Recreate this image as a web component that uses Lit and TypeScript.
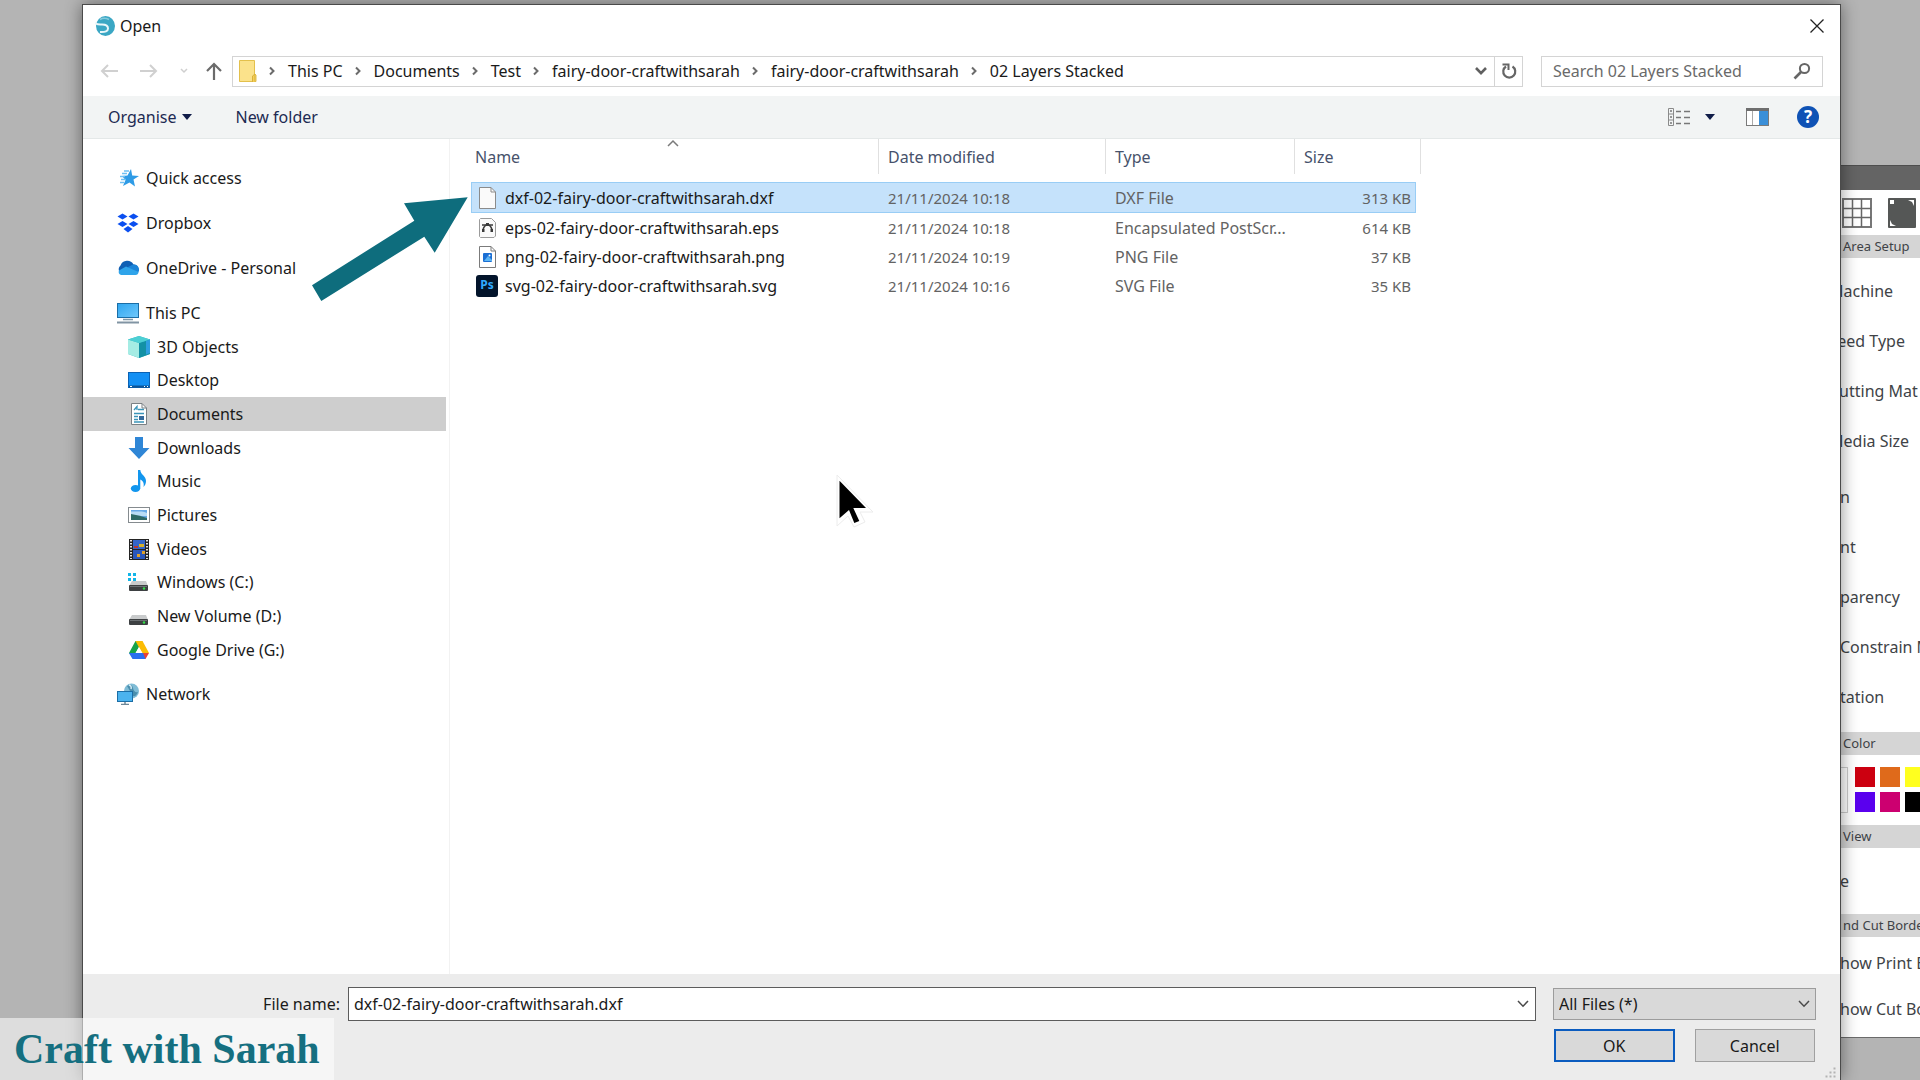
import { LitElement, html, css, svg, type TemplateResult } from "lit";
import { customElement, state } from "lit/decorators.js";
import { classMap } from "lit/directives/class-map.js";

const icon = (w: number, h: number, body: unknown) =>
  html`<svg width=${w} height=${h} viewBox="0 0 ${w} ${h}" aria-hidden="true" fill="none">${body}</svg>`;

const chevronRight = () => icon(8, 10, svg`<path d="M2 1.500 5.500 5 2 8.500" stroke="#6b6b6b" stroke-width="2"/>`);
const chevronDown = (color: string, width: number) =>
  icon(14, 10, svg`<path d="M2 2 7 7.200 12 2" stroke=${color} stroke-width=${width}/>`);
const caret = () => icon(10, 6, svg`<path d="M0 0H10L5 6Z" fill="#101c48"/>`);

const drive = svg`
  <path d="M4 10H18L20 15H1Z" fill="#c9cbcc"/>
  <rect x="1" y="14" width="19" height="6" rx="1" fill="#3d4042"/>
  <rect x="2" y="15" width="17" height="1" fill="#6b7073"/>
  <circle cx="16" cy="17.500" r="1.200" fill="#35e04a"/>`;

const ICONS: Record<string, () => TemplateResult> = {
  quick: () => icon(22, 22, svg`
    <path d="M14 2 15.200 8.500 22 9 16.500 12.500 18 19.500 12.500 15.500 6 19 8.500 13 5 9 10.500 8.500Z" fill="#2e9be6"/>
    <path d="M7 4H12M5 6.500H10M3 9.500H8M4 12.500H9M3 15.500H7" stroke="#6fc0f2" stroke-width="1.400"/>`),
  dropbox: () => icon(22, 22, svg`
    <g fill="#0b4ff0"><path d="M5.500 1.500 10.500 4.500 5.500 7.500 .5 4.500Z"/><path d="M16.500 1.500 21.500 4.500 16.500 7.500 11.500 4.500Z"/>
    <path d="M5.500 9 10.500 12 5.500 15 .5 12Z"/><path d="M16.500 9 21.500 12 16.500 15 11.500 12Z"/>
    <path d="M11 14 15.500 17 11 20.500 6.500 17Z"/></g>`),
  onedrive: () => icon(22, 22, svg`
    <path d="M5 17A5 5 0 0 1 3.500 8.500 7.200 7.200 0 0 1 16.500 7.500 5 5 0 0 1 20 16Z" fill="#0f5fb4"/>
    <path d="M11 10 16 7.600A5 5 0 0 1 20 16.500L12 14Z" fill="#1b84d8"/>
    <path d="M4 18A3.500 3.500 0 0 1 2 13.500L9 9.500 21.500 15A3.300 3.300 0 0 1 18.500 18Z" fill="#2fa4ea"/>`),
  pc: () => icon(22, 22, svg`
    <defs><linearGradient id="g" x1="0" y1="0" x2="1" y2="1"><stop stop-color="#2ea6f0"/><stop offset="1" stop-color="#70c8fb"/></linearGradient></defs>
    <rect x=".5" y="1.500" width="21" height="14" fill="url(#g)" stroke="#1c6ea6"/>
    <path d="M6 17.500H16" stroke="#7f98a8" stroke-width="1.500"/><path d="M0 20.500H22" stroke="#8194a3" stroke-width="2"/>`),
  objects: () => icon(22, 22, svg`
    <path d="M11 0 22 3.500V18L11 22 0 18V3.500Z" fill="#35b9c4"/>
    <path d="M0 3.500 11 7V22L0 18Z" fill="#a5ece4"/><path d="M11 7 22 3.500V18L11 22Z" fill="#1391a5"/>
    <path d="M0 3.500 11 0 22 3.500 11 7Z" fill="#4dcfd4"/><path d="M18 5 22 3.500V17L18 18.500Z" fill="#2f9fe0"/>`),
  desktop: () => icon(22, 22, svg`
    <rect x=".5" y="3.500" width="21" height="15" fill="#1390f4" stroke="#0b62b4"/>
    <path d="M1 17.500H21" stroke="#0d5496" stroke-width="2"/><path d="M2 17.500H4M16 17.500H17M19 17.500H20" stroke="#fff"/>`),
  documents: () => icon(22, 22, svg`
    <path d="M3.500.5H14L18.500 5V21.500H3.500Z" fill="#fff" stroke="#7b8083"/><path d="M14 .5V5H18.500" stroke="#7b8083"/>
    <path d="M6 7 9 3.500V7M10 6.500H16M6 10.500H16M6 13.500H10M6 16.500H10M6 19H16" stroke="#3a94b8" stroke-width="1.300"/>
    <rect x="11" y="13" width="5" height="4" fill="#356a9c"/>`),
  downloads: () => icon(22, 22, svg`<path d="M7 0H15V11H21.500L11 22 .5 11H7Z" fill="#2f86d6"/>`),
  music: () => icon(22, 22, svg`
    <ellipse cx="7.500" cy="18.500" rx="4.700" ry="3.500" fill="#1296ee"/>
    <path d="M10 0H12.300C12.500 4.500 18 6 18 11 18 13.500 17 15.500 15.500 17 16.500 12.500 14.500 10.500 12.300 9.500V18.500H10Z" fill="#1296ee"/>`),
  pictures: () => icon(22, 22, svg`
    <rect x=".5" y="3.500" width="21" height="15" fill="#fff" stroke="#858b8f"/><rect x="3" y="6" width="16" height="10" fill="#66a9e6"/>
    <path d="M3 7.500H12Q16 7 19 9V12H3Z" fill="#b9dcf5"/><path d="M3 10Q10 11 19 14V16H3Z" fill="#2f6a66"/>`),
  videos: () => icon(22, 22, svg`
    <rect x="1" y="1" width="20" height="21" fill="#232323"/><rect x="5" y="2" width="12" height="9" fill="#3466c8"/><rect x="5" y="12" width="12" height="9" fill="#2a57bb"/>
    <path d="M3 2V21M19 2V21" stroke="#e4e4e4" stroke-width="2" stroke-dasharray="1.500 1.500"/>
    <path d="M11 6H16V9H11Z" fill="#d6b12b"/><path d="M6 8H10V10H6Z" fill="#b9372f"/><path d="M9 16H12V19H9ZM14 13H17V16H14Z" fill="#e0a12a"/>`),
  windows: () => icon(22, 22, svg`${drive}<path d="M0 2H3V5H0ZM5 2H8V5H5ZM0 7H3V10H0ZM5 7H8V10H5Z" fill="#12b5e8"/>`),
  volume: () => icon(22, 22, drive),
  gdrive: () => icon(22, 22, svg`
    <path d="M7.500 2H14.500L11 8 5 19 1 14Z" fill="#16a34a"/><path d="M7.500 2H14.500L21 14H14Z" fill="#fbbc04"/>
    <path d="M14 14H21L17.500 20H15Z" fill="#e94235"/><path d="M1 14H15L17.500 20H4.500Z" fill="#2a6ef0"/><path d="M11 8 14.500 14H7.500Z" fill="#fff"/>`),
  network: () => icon(22, 22, svg`
    <circle cx="14.500" cy="8" r="7.500" fill="#7fbcd6"/><path d="M10 3Q15 0 16 5T21 9Q19 14 16 13Z" fill="#4a8ead"/><path d="M12 2Q15 3 14 6" stroke="#d5ebf4" stroke-width="1.500"/>
    <rect x=".5" y="8.500" width="15" height="10" fill="#4bb3ee" stroke="#1c6ea6"/><path d="M8 19V21M4 21.500H12" stroke="#6d8798" stroke-width="1.500"/>`),
  blank: () => icon(22, 24, svg`<path d="M3.500 1.500H15L19.500 6V22.500H3.500Z" fill="#fafafa" stroke="#8b8b8b"/><path d="M15 1.500V6H19.500" stroke="#8b8b8b"/>`),
  eps: () => icon(22, 24, svg`
    <path d="M4.500 2.500H15.500L19.500 6.500V20L18 21.500H4.500L3.500 20.500V3.500Z" fill="#fafafa" stroke="#9b9b9b"/>
    <path d="M7 14Q8 9 11.500 9T16 14" stroke="#3a3a3a" stroke-width="1.600"/><path d="M6 9H17" stroke="#3a3a3a" stroke-width="1.500"/><path d="M10 7H13V10H10ZM6 13H8.500V16H6ZM14.500 13H17V16H14.500Z" fill="#3a3a3a"/>`),
  png: () => icon(22, 24, svg`
    <path d="M3.500 1.500H15L19.500 6V22.500H3.500Z" fill="#fff" stroke="#7b7b7b"/><path d="M15 1.500V6H19.500" stroke="#7b7b7b"/>
    <rect x="7" y="8" width="9" height="9" rx="1" fill="#1b6fd4"/><path d="M8 16 12 11 16 15V16Z" fill="#5db6f5"/><circle cx="13.500" cy="10.500" r="1" fill="#fff"/>`),
};

interface Place { icon: string; label: string; child?: boolean; selected?: boolean }

const PLACES: Place[][] = [
  [{ icon: "quick", label: "Quick access" }],
  [{ icon: "dropbox", label: "Dropbox" }],
  [{ icon: "onedrive", label: "OneDrive - Personal" }],
  [
    { icon: "pc", label: "This PC" },
    { icon: "objects", label: "3D Objects", child: true },
    { icon: "desktop", label: "Desktop", child: true },
    { icon: "documents", label: "Documents", child: true, selected: true },
    { icon: "downloads", label: "Downloads", child: true },
    { icon: "music", label: "Music", child: true },
    { icon: "pictures", label: "Pictures", child: true },
    { icon: "videos", label: "Videos", child: true },
    { icon: "windows", label: "Windows (C:)", child: true },
    { icon: "volume", label: "New Volume (D:)", child: true },
    { icon: "gdrive", label: "Google Drive (G:)", child: true },
  ],
  [{ icon: "network", label: "Network" }],
];

const CRUMBS = ["This PC", "Documents", "Test", "fairy-door-craftwithsarah", "fairy-door-craftwithsarah", "02 Layers Stacked"];

const FILES = [
  { icon: "blank", name: "dxf-02-fairy-door-craftwithsarah.dxf", date: "21/11/2024 10:18", type: "DXF File", size: "313 KB" },
  { icon: "eps", name: "eps-02-fairy-door-craftwithsarah.eps", date: "21/11/2024 10:18", type: "Encapsulated PostScr...", size: "614 KB" },
  { icon: "png", name: "png-02-fairy-door-craftwithsarah.png", date: "21/11/2024 10:19", type: "PNG File", size: "37 KB" },
  { icon: "ps", name: "svg-02-fairy-door-craftwithsarah.svg", date: "21/11/2024 10:16", type: "SVG File", size: "35 KB" },
];

const base = css`
  :host { box-sizing: border-box; font-family: "Noto Sans", "Open Sans", sans-serif; font-size: 16px; line-height: 22px; color: #1a1a1a; }
  *, *::before, *::after { box-sizing: border-box; }
  svg { display: block; flex: none; }
  button, input, select { font: inherit; color: inherit; margin: 0; border-radius: 0; }
  button { border: 0; padding: 0; background: none; display: flex; align-items: center; justify-content: center; }
  a { color: inherit; text-decoration: none; }
  ul, ol { list-style: none; margin: 0; padding: 0; }
`;

@customElement("side-places")
class SidePlaces extends LitElement {
  static styles = [base, css`
    :host { display: flex; flex-direction: column; gap: 11px; padding-top: 22px; border-right: 1px solid #f2f2f2; }
    .group { display: grid; grid-template-rows: 34px; grid-auto-rows: 33px 34px 34px; margin-right: 3px; }
    .place { display: flex; align-items: center; gap: 7px; height: 100%; padding-left: 34px; }
    .child { padding-left: 45px; }
    .selected { background: #cecece; }
  `];
  render() {
    return html`${PLACES.map((group) => html`<ul class="group">${group.map((p) => html`
      <li><a href="#" class=${classMap({ place: true, child: !!p.child, selected: !!p.selected })}>${ICONS[p.icon]()}<span>${p.label}</span></a></li>`)}</ul>`)}`;
  }
}

@customElement("file-list")
class FileList extends LitElement {
  @state() private selected = 0;
  static styles = [base, css`
    :host { display: block; padding-left: 21px; }
    table { width: 950px; table-layout: fixed; border-collapse: separate; border-spacing: 0; }
    .name { width: 408px; } .date { width: 227px; } .type { width: 189px; }
    th { padding: 0 0 8px; font-weight: 400; text-align: left; color: #47526b; }
    .head { position: relative; display: flex; align-items: center; height: 35px; padding-left: 9px; border-right: 1px solid #e0e0e0; }
    .name .head { padding-left: 4px; }
    .sort { position: absolute; top: 0; left: 50%; margin-left: -8px; }
    td { height: 29px; padding: 0 0 0 9px; color: #636363; white-space: nowrap; }
    td:first-child { padding-left: 5px; color: #1a1a1a; }
    td:last-child { padding-right: 5px; text-align: right; border-right: 5px solid transparent; background-clip: padding-box; }
    .digits { font-size: 15px; }
    .file { display: flex; align-items: center; gap: 7px; }
    .ps { width: 22px; height: 22px; flex: none; border-radius: 3px; background: #03142b; color: #31a8ff; font-size: 12px; line-height: 20px; font-weight: 700; text-align: center; }
    .chosen td { height: 31px; background-color: #c5e2fb; box-shadow: inset 0 1px #99cdf5, inset 0 -1px #99cdf5; }
    .chosen td:first-child { box-shadow: inset 0 1px #99cdf5, inset 0 -1px #99cdf5, inset 1px 0 #99cdf5; }
    .chosen td:last-child { box-shadow: inset 0 1px #99cdf5, inset 0 -1px #99cdf5, inset -1px 0 #99cdf5; }
  `];
  render() {
    return html`<table>
      <thead><tr>
        <th class="name"><div class="head">Name<span class="sort">${icon(12, 8, svg`<path d="M1 7 6 2 11 7" stroke="#7a7a7a" stroke-width="1.500"/>`)}</span></div></th>
        <th class="date"><div class="head">Date modified</div></th>
        <th class="type"><div class="head">Type</div></th>
        <th><div class="head">Size</div></th>
      </tr></thead>
      <tbody>${FILES.map((f, i) => html`<tr class=${i === this.selected ? "chosen" : ""} @click=${() => (this.selected = i)}>
        <td><div class="file">${f.icon === "ps" ? html`<span class="ps">Ps</span>` : ICONS[f.icon]()}<span>${f.name}</span></div></td>
        <td class="digits">${f.date}</td><td>${f.type}</td><td class="digits">${f.size}</td></tr>`)}</tbody>
    </table>`;
  }
}

@customElement("open-dialog")
class OpenDialog extends LitElement {
  static styles = [base, css`
    :host { display: flex; flex-direction: column; background: #fff; border: 1px solid #4a4a4a; border-bottom: 0; box-shadow: 0 0 16px rgba(0, 0, 0, .45); }
    .title { display: flex; align-items: center; gap: 5px; height: 42px; padding: 0 16px 0 12px; }
    .title h1 { flex: 1; margin: 0; font-size: 16px; font-weight: 400; }
    .nav { display: flex; align-items: center; height: 49px; padding: 0 17px 1px 16px; }
    .arrows { display: flex; align-items: center; width: 133px; gap: 20px; }
    .arrows button:last-child { margin-left: -4px; }
    .address { flex: 1; min-width: 0; display: flex; align-items: center; height: 31px; border: 1px solid #d4d4d4; padding-left: 5px; }
    .crumbs { flex: 1; display: flex; align-items: center; padding-left: 11px; white-space: nowrap; }
    .crumbs li { display: flex; align-items: center; gap: 12px; padding-right: 11px; }
    .drop { width: 26px; height: 29px; }
    .refresh { width: 28px; height: 29px; border-left: 1px solid #d4d4d4; }
    .search { display: flex; align-items: center; width: 282px; height: 31px; margin-left: 18px; border: 1px solid #d4d4d4; padding: 0 11px; }
    .search input { flex: 1; min-width: 0; border: 0; padding: 0; outline: 0; background: none; }
    .search input::placeholder { color: #6a6a6a; opacity: 1; }
    .tools { display: flex; align-items: center; height: 43px; padding: 0 21px 0 25px; background: #f2f4f4; border-bottom: 1px solid #e4e8e8; color: #1d2a52; }
    .organise { gap: 6px; margin-right: 43px; }
    .spacer { flex: 1; }
    .view { gap: 14px; margin-right: 31px; }
    .preview { margin-right: 28px; }
    .help { width: 22px; height: 22px; border-radius: 50%; background: #0f52b5; color: #fff; font-size: 17px; font-weight: 700; line-height: 22px; }
    .body { flex: 1; display: flex; min-height: 0; }
    side-places { width: 367px; flex: none; }
    file-list { flex: 1; min-width: 0; }
    .foot { position: relative; display: grid; grid-template-columns: 257px 1fr 263px; column-gap: 8px; row-gap: 8px; align-items: center; padding: 13px 24px 18px 0; background: #ececec; }
    .foot label { text-align: right; }
    .combo { display: flex; align-items: center; height: 34px; margin-right: 9px; border: 1px solid #5c5c5c; background: #fff; }
    .combo input { flex: 1; min-width: 0; height: 100%; border: 0; outline: 0; padding: 0 5px; background: none; }
    .combo button { width: 24px; height: 100%; }
    .filter { position: relative; display: flex; align-items: center; }
    .filter select { width: 100%; height: 32px; appearance: none; border: 1px solid #9c9c9c; background: #d9d9d9; padding: 0 5px; color: #1a1a1a; }
    .filter svg { position: absolute; right: 5px; pointer-events: none; }
    .actions { grid-column: 3; display: grid; grid-template-columns: 1fr 1fr; gap: 20px; padding: 0 1px; }
    .actions button { height: 33px; border: 1px solid #a0a0a0; background: #d9d9d9; }
    .actions .primary { border: 2px solid #0b5cbf; }
    .grip { position: absolute; right: 3px; bottom: 1px; }
  `];
  render() {
    return html`
      <header class="title">
        ${icon(20, 22, svg`<ellipse cx="10.500" cy="11" rx="9.500" ry="10" fill="#3ba7c4"/>
          <path d="M0 8Q3 10 7 9.500 13 9.500 13 13.500T5 17" stroke="#e9f7fa" stroke-width="2"/><path d="M5 4.500Q9 2 14 4.500" stroke="#86cbdd" stroke-width="1.500"/>`)}
        <h1>Open</h1>
        <button aria-label="Close">${icon(14, 14, svg`<path d="M.5.500 13.500 13.500M13.500.500.500 13.500" stroke="#222" stroke-width="1.300"/>`)}</button>
      </header>
      <div class="nav">
        <div class="arrows">
          <button aria-label="Back">${icon(20, 16, svg`<path d="M19 8H3M9 2 3 8 9 14" stroke="#d0d0d0" stroke-width="2"/>`)}</button>
          <button aria-label="Forward">${icon(20, 16, svg`<path d="M1 8H17M11 2 17 8 11 14" stroke="#d0d0d0" stroke-width="2"/>`)}</button>
          <button aria-label="Recent locations">${icon(10, 8, svg`<path d="M2 2 5 5 8 2" stroke="#cfcfcf" stroke-width="1.500"/>`)}</button>
          <button aria-label="Up">${icon(18, 18, svg`<path d="M9 18V2M2 9 9 2 16 9" stroke="#6b6b6b" stroke-width="2.200"/>`)}</button>
        </div>
        <div class="address">
          ${icon(19, 24, svg`<path d="M1.500 1.500H16.500V15L18 16V22.500H1.500Z" fill="#fbe28b" stroke="#e3c04c"/><path d="M14.500 23V17L17 15V22.500" fill="#f5cf57" stroke="#d9b13a"/>`)}
          <ol class="crumbs">${CRUMBS.map((c) => html`<li>${chevronRight()}<a href="#">${c}</a></li>`)}</ol>
          <button class="drop" aria-label="Previous locations">${chevronDown("#606060", 2.6)}</button>
          <button class="refresh" aria-label="Refresh">${icon(16, 18, svg`<path d="M5 4.500A6 6 0 1 0 11.500 4.500" stroke="#666" stroke-width="2.200"/><path d="M1.500 2.500H7.500V8" stroke="#666" stroke-width="2"/>`)}</button>
        </div>
        <div class="search"><input type="search" aria-label="Search" placeholder="Search 02 Layers Stacked">
          ${icon(18, 18, svg`<circle cx="11.500" cy="6.500" r="4.600" stroke="#666" stroke-width="2"/><path d="M8 10 1.500 16.500" stroke="#666" stroke-width="2.600"/>`)}</div>
      </div>
      <div class="tools">
        <button class="organise">Organise ${caret()}</button><button>New folder</button><span class="spacer"></span>
        <button class="view" aria-label="View">${icon(24, 20, svg`
          <path d="M1.500 1.500H6.500V18.500H1.500ZM1.500 7H6.500M1.500 13H6.500" stroke="#8a8a8a"/><path d="M3 4H5M3 10H5M3 16H5" stroke="#777" stroke-width="1.500"/>
          <path d="M9 4.500H14M17 4.500H23M9 10.500H14M17 10.500H23M9 16.500H14M17 16.500H23" stroke="#777" stroke-width="1.300"/>`)}${caret()}</button>
        <button class="preview" aria-label="Preview pane">${icon(23, 18, svg`<rect x=".5" y=".5" width="22" height="17" fill="#fff" stroke="#7a7a7a"/><path d="M0 1.500H23" stroke="#6e6e6e" stroke-width="3"/><path d="M6.500 3V17" stroke="#aaa"/><rect x="13" y="3" width="9" height="14" fill="#3a8fd8"/>`)}</button>
        <button class="help" aria-label="Help">?</button>
      </div>
      <div class="body"><side-places></side-places><file-list></file-list></div>
      <div class="foot">
        <label for="name">File name:</label>
        <div class="combo"><input id="name" type="text" .value=${"dxf-02-fairy-door-craftwithsarah.dxf"}>
          <button aria-label="Recent names">${chevronDown("#4a4a4a", 1.5)}</button></div>
        <div class="filter"><select aria-label="File type"><option>All Files (*)</option></select>${chevronDown("#4a4a4a", 1.5)}</div>
        <div class="actions"><button class="primary">OK</button><button>Cancel</button></div>
        <span class="grip">${icon(12, 12, svg`<path d="M8 0H11V3H8ZM4 4H7V7H4ZM8 4H11V7H8ZM0 8H3V11H0ZM4 8H7V11H4ZM8 8H11V11H8Z" fill="#b3b3b3" stroke="#ececec"/>`)}</span>
      </div>`;
  }
}

@customElement("page-panel")
class PagePanel extends LitElement {
  static styles = [base, css`
    :host { display: block; background: #fff; color: #404347; border-bottom: 1px solid #6a6a6a; overflow: hidden; white-space: nowrap; }
    .top { height: 25px; background: #646464; border-top: 1px solid #4e4e4e; }
    .tabs { display: flex; align-items: center; gap: 16px; height: 45px; padding-left: 18px; }
    h2 { margin: 0; height: 23px; padding-left: 19px; background: #d5d5d5; font-size: 13px; line-height: 23px; font-weight: 400; }
    .rows { padding: 8px 0 6px 5px; }
    .tail { padding: 0 0 10px 16px; }
    .single { padding: 8px 0 8px 16px; }
    .border { padding: 3px 0 5px 16px; }
    .rows li { height: 50px; line-height: 50px; }
    .border li { height: 46px; line-height: 46px; }
    .colors { display: flex; gap: 7px; height: 70px; padding: 12px 0 0 4px; }
    .current { flex: none; width: 20px; height: 46px; border: 1px solid #ccc; }
    .swatches { flex: none; display: grid; grid-template-columns: repeat(3, 20px); grid-auto-rows: 20px; gap: 5px; }
    .red { background: #cc0010; } .orange { background: #df6a1b; } .yellow { background: #ffff1f; }
    .violet { background: #5a00ee; } .pink { background: #cc0070; } .black { background: #000; }
  `];
  private rows(cls: string, items: string[]) {
    return html`<ul class="rows ${cls}">${items.map((t) => html`<li>${t}</li>`)}</ul>`;
  }
  render() {
    return html`<div class="top"></div>
      <div class="tabs">
        ${icon(30, 30, svg`<rect x="1" y="1" width="28" height="28" stroke="#777" stroke-width="2"/><path d="M10.500 1V29M19.500 1V29M1 10.500H29M1 19.500H29" stroke="#666" stroke-width="1.500"/>`)}
        ${icon(28, 30, svg`<rect width="28" height="30" rx="1" fill="#555756"/><path d="M2 2H6V6H2ZM20 2H26V8L24 4ZM2 22V28H8L4 26Z" fill="#fff"/>`)}
      </div>
      <h2>Area Setup</h2>
      ${this.rows("", ["Machine", "Feed Type", "Cutting Mat", "Media Size"])}
      ${this.rows("tail", ["n", "nt", "parency", "Constrain M", "tation"])}
      <h2>Color</h2>
      <div class="colors"><div class="current"></div><div class="swatches">${["red", "orange", "yellow", "violet", "pink", "black"].map((c) => html`<div class=${c}></div>`)}</div></div>
      <h2>View</h2>
      ${this.rows("single", ["e"])}
      <h2>nd Cut Borde</h2>
      ${this.rows("border", ["how Print B", "how Cut Bo"])}`;
  }
}

@customElement("app-root")
class AppRoot extends LitElement {
  static styles = [base, css`
    :host { position: relative; display: block; height: 100vh; min-height: 860px; overflow: hidden; background: #b4b4b4; }
    page-panel { position: absolute; top: 165px; right: 0; width: 96px; }
    open-dialog { position: absolute; inset: 4px 79px 0 82px; }
    .arrow { position: absolute; left: 310px; top: 195px; }
    .pointer { position: absolute; left: 834px; top: 472px; }
    .brand { position: absolute; left: 0; bottom: 0; width: 334px; height: 62px; padding-left: 14px; background: rgba(255, 255, 255, .55); color: #156f80; font-family: "Liberation Serif", serif; font-size: 42px; line-height: 62px; font-weight: 700; white-space: nowrap; }
  `];
  render() {
    return html`<page-panel></page-panel><open-dialog></open-dialog>
      <div class="arrow">${icon(160, 108, svg`<path d="M157.700 2.300 94 8.300 104.300 25.700 2 90.300 11.300 106 114.300 41.700 124.700 57.700Z" fill="#0e6d7d"/>`)}</div>
      <div class="pointer">${icon(42, 56, svg`<path d="M3 3V54L14 44 20 55 31 50 26 40H39Z" fill="#fff" stroke="#ececec"/><path d="M5.500 8.700 32 36H19.300L25.300 49 20.300 51 15 38 5.500 46.300Z" fill="#000"/>`)}</div>
      <div class="brand">Craft with Sarah</div>`;
  }
}
